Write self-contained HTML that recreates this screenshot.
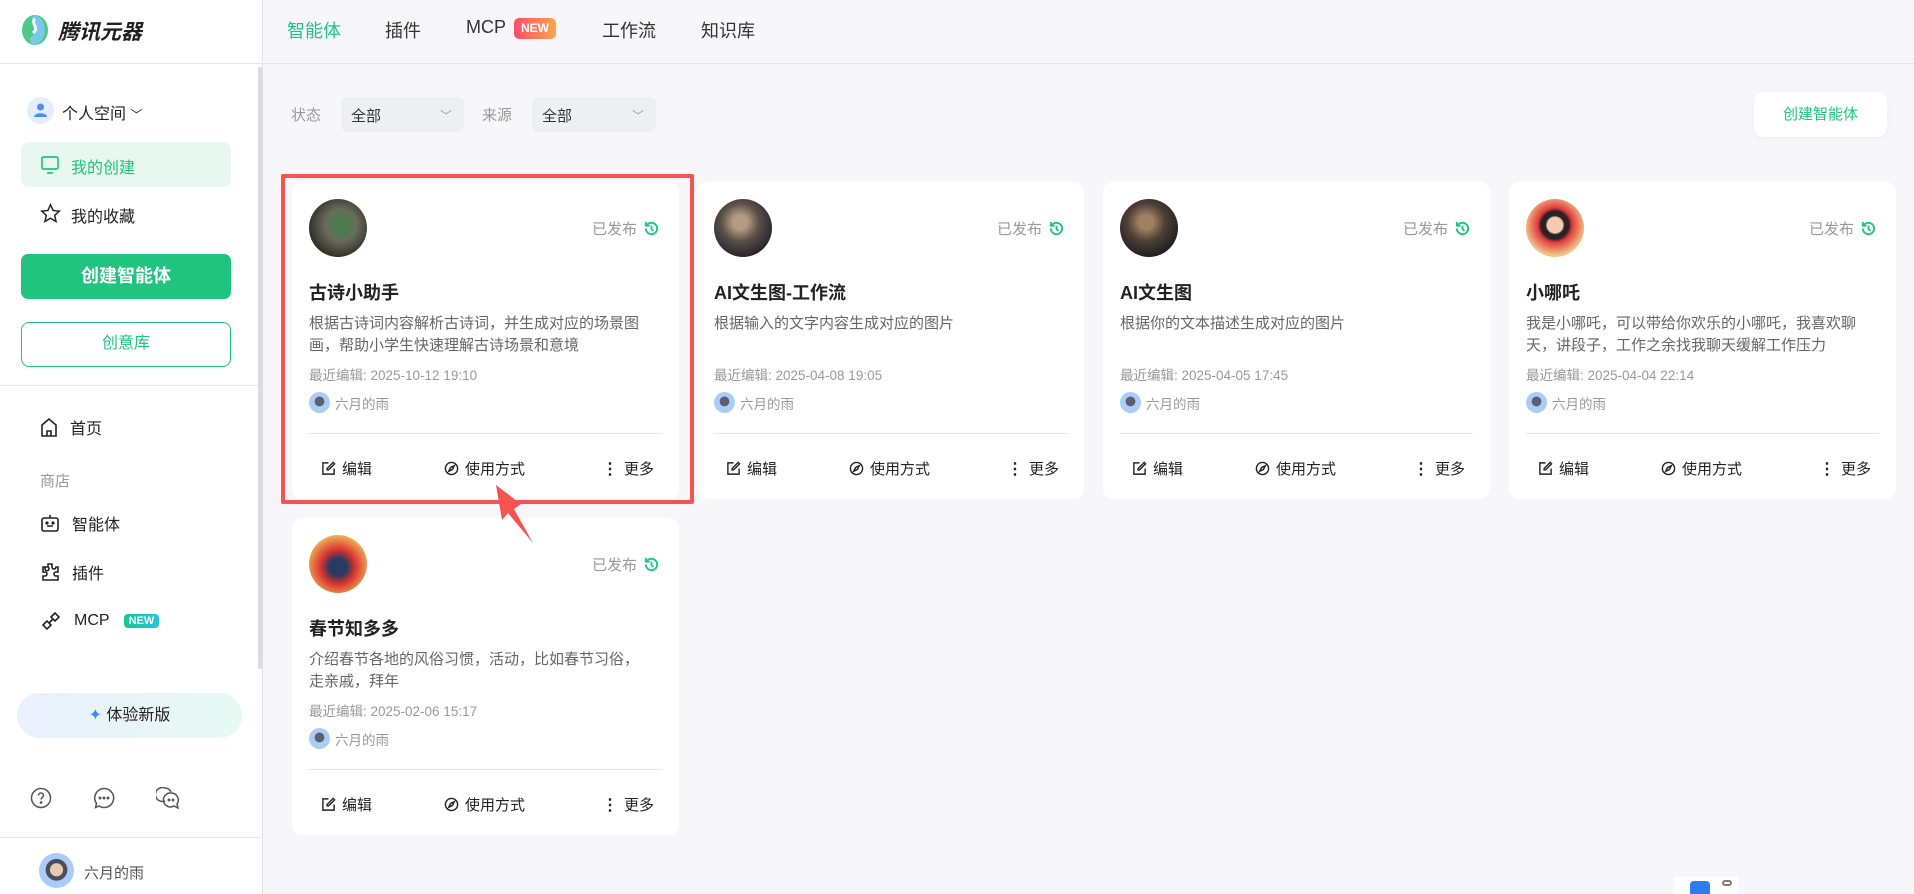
<!DOCTYPE html>
<html><head><meta charset="utf-8">
<style>
*{margin:0;padding:0;box-sizing:border-box}
body{width:1914px;height:894px;overflow:hidden;background:#f7f7fb;font-family:"Liberation Sans","Noto Sans CJK SC",sans-serif;color:#222;position:relative}
.abs{position:absolute}
.side{position:absolute;left:0;top:0;width:263px;height:894px;background:#fff;border-right:1px solid #e6e6ea}
.nav{position:absolute;font-size:18px;color:#333;top:17px}
.card{position:absolute;width:387px;height:317px;background:#fff;border-radius:10px}
.av{position:absolute;left:17px;top:17px;width:58px;height:58px;border-radius:50%}
.pub{position:absolute;right:19px;top:36px;font-size:15px;color:#999;display:flex;align-items:center;gap:6px}
.ttl{position:absolute;left:17px;top:97px;font-size:18px;font-weight:bold;color:#222}
.desc{position:absolute;left:17px;top:131px;width:340px;font-size:15px;line-height:22px;color:#666}
.time{position:absolute;left:17px;top:182px;font-size:13.5px;color:#999}
.auth{position:absolute;left:17px;top:210px;font-size:13.5px;color:#999;display:flex;align-items:center;gap:5px}
.auth i{width:21px;height:21px;border-radius:50%;background:radial-gradient(circle at 50% 45%,#5a5f70 30%,#a9cdf8 32%)}
.line{position:absolute;left:17px;right:17px;top:251px;border-top:1px solid #e8e8ec}
.act{position:absolute;top:276px;font-size:15px;color:#222;display:flex;align-items:center;gap:6px}
.si{position:absolute;left:40px;font-size:16px;color:#222;display:flex;align-items:center;gap:12px}
</style></head><body>
<div class="side">
  <svg class="abs" style="left:20px;top:14px" width="30" height="32" viewBox="0 0 30 32"><ellipse cx="15" cy="16" rx="13" ry="15" fill="#4fc98a"/><path d="M15 1 C4 6 26 14 12 22 C8 25 10 30 15 31 C28 27 28 5 15 1Z" fill="#7ac8e8"/><path d="M15 5 C10 9 20 14 13 19" stroke="#fff" stroke-width="3" fill="none"/></svg>
  <div class="abs" style="left:58px;top:16px;font-size:21px;font-weight:bold;font-style:italic;color:#222">腾讯元器</div>
  <div class="abs" style="left:0;top:63px;width:263px;border-top:1px solid #e6e6ea"></div>
  <div class="abs" style="left:27px;top:97px;width:27px;height:27px;border-radius:50%;background:#e3edfd"><svg width="27" height="27"><circle cx="13.5" cy="10" r="3.5" fill="#4b8cf5"/><path d="M7 20c0-5 13-5 13 0z" fill="#4b8cf5"/></svg></div>
  <div class="abs" style="left:62px;top:100px;font-size:16px">个人空间 <span style="font-size:12px">﹀</span></div>
  <div class="abs" style="left:21px;top:142px;width:210px;height:45px;background:#e8f7ef;border-radius:8px"></div>
  <svg class="abs" style="left:40px;top:155px" width="20" height="20" viewBox="0 0 20 20" fill="none" stroke="#20c47f" stroke-width="1.7"><rect x="2" y="2" width="16" height="12" rx="1.5"/><path d="M7 18h6"/></svg>
  <div class="abs" style="left:71px;top:154px;font-size:16px;color:#20c47f">我的创建</div>
  <svg class="abs" style="left:40px;top:203px" width="21" height="21" viewBox="0 0 24 24" fill="none" stroke="#222" stroke-width="1.7"><path d="M12 2l3 6.5 7 .8-5.2 4.8 1.5 7-6.3-3.7-6.3 3.7 1.5-7L2 9.3l7-.8z"/></svg>
  <div class="abs" style="left:71px;top:203px;font-size:16px">我的收藏</div>
  <div class="abs" style="left:21px;top:254px;width:210px;height:45px;background:#20c47f;border-radius:7px;color:#fff;font-size:18px;font-weight:bold;text-align:center;line-height:45px">创建智能体</div>
  <div class="abs" style="left:21px;top:322px;width:210px;height:45px;border:1.5px solid #20c47f;border-radius:8px;color:#20c47f;font-size:16px;text-align:center;line-height:42px">创意库</div>
  <div class="abs" style="left:0;top:385px;width:258px;border-top:1px solid #e6e6ea"></div>
  <div class="si" style="top:415px"><svg width="18" height="20" viewBox="0 0 18 20" fill="none" stroke="#222" stroke-width="1.6"><path d="M2 8l7-6 7 6v11H2z M7 19v-5h4v5"/></svg>首页</div>
  <div class="abs" style="left:40px;top:470px;font-size:15px;color:#999">商店</div>
  <div class="si" style="top:511px"><svg width="20" height="20" viewBox="0 0 20 20" fill="none" stroke="#222" stroke-width="1.6"><rect x="2" y="5" width="16" height="13" rx="2"/><path d="M10 2v3M7 13h6"/><circle cx="7" cy="10" r=".8" fill="#222"/><circle cx="13" cy="10" r=".8" fill="#222"/></svg>智能体</div>
  <div class="si" style="top:560px"><svg width="20" height="20" viewBox="0 0 20 20" fill="none" stroke="#222" stroke-width="1.6"><path d="M8 2h4v3a2 2 0 104 0h2v5h-2a2 2 0 100 4h2v4H3v-4h2a2 2 0 100-4H3V5h3a2 2 0 102 0z"/></svg>插件</div>
  <div class="si" style="top:610px"><svg width="22" height="22" viewBox="0 0 22 22" fill="none" stroke="#222" stroke-width="1.6"><path d="M3 15l4-4 4 4-4 4zM11 7l4-4 4 4-4 4zM9 13l4-4"/></svg>MCP <span style="background:linear-gradient(90deg,#12c98f,#27c4e0);color:#fff;font-size:11px;font-weight:bold;border-radius:4px;padding:1px 5px;margin-left:2px">NEW</span></div>
  <div class="abs" style="left:17px;top:693px;width:225px;height:45px;border-radius:23px;background:linear-gradient(90deg,#eaf0fd,#e6faf3);font-size:16px;text-align:center;line-height:45px"><span style="color:#3a8cf0">✦</span> 体验新版</div>
  <svg class="abs" style="left:30px;top:787px" width="22" height="22" viewBox="0 0 22 22" fill="none" stroke="#555" stroke-width="1.5"><circle cx="11" cy="11" r="9.5"/><path d="M8.5 8.5a2.5 2.5 0 115 0c0 1.8-2.5 2-2.5 4"/><circle cx="11" cy="15.5" r=".6" fill="#555"/></svg>
  <svg class="abs" style="left:93px;top:787px" width="22" height="22" viewBox="0 0 22 22" fill="none" stroke="#555" stroke-width="1.5"><path d="M11 1.5a9.5 9.5 0 11-5 17.5L2.5 20.5l1-4A9.5 9.5 0 0111 1.5z"/><circle cx="7" cy="11" r=".7" fill="#555"/><circle cx="11" cy="11" r=".7" fill="#555"/><circle cx="15" cy="11" r=".7" fill="#555"/></svg>
  <svg class="abs" style="left:156px;top:787px" width="24" height="22" viewBox="0 0 24 22" fill="none" stroke="#555" stroke-width="1.5"><path d="M9 14A7 7 0 119 1a7 7 0 016 4"/><path d="M15 6a7 7 0 016 11l1 4-4-2A7 7 0 1115 6z"/><circle cx="13" cy="13" r=".7" fill="#555"/><circle cx="17" cy="13" r=".7" fill="#555"/></svg>
  <div class="abs" style="left:0;top:837px;width:263px;border-top:1px solid #e6e6ea"></div>
  <div class="abs" style="left:39px;top:853px;width:35px;height:35px;border-radius:50%;background:radial-gradient(circle at 50% 48%,#e8c8b0 0 25%,#4a4e5c 27% 42%,#a9cdf8 44%)"></div>
  <div class="abs" style="left:84px;top:862px;font-size:15px;color:#555">六月的雨</div>
</div>
<div class="abs" style="left:258px;top:67px;width:5px;height:602px;background:#dcdce0;border-radius:3px"></div>

<div class="abs" style="left:263px;top:63px;width:1651px;border-top:1px solid #e6e6ea"></div>
<div class="nav" style="left:287px;color:#20c47f">智能体</div>
<div class="nav" style="left:385px">插件</div>
<div class="nav" style="left:466px">MCP</div>
<div class="abs" style="left:514px;top:18px;width:42px;height:21px;border-radius:5px;background:linear-gradient(90deg,#ff4d6a,#ffa64d);color:#fff;font-size:12px;font-weight:bold;text-align:center;line-height:21px">NEW</div>
<div class="nav" style="left:602px">工作流</div>
<div class="nav" style="left:701px">知识库</div>

<div class="abs" style="left:291px;top:104px;font-size:15px;color:#999">状态</div>
<div class="abs" style="left:341px;top:97px;width:123px;height:35px;background:#eeeff3;border-radius:7px;font-size:15px;color:#333;padding:8px 0 0 10px">全部<span style="position:absolute;right:12px;top:10px;color:#999;font-size:12px">﹀</span></div>
<div class="abs" style="left:482px;top:104px;font-size:15px;color:#999">来源</div>
<div class="abs" style="left:532px;top:97px;width:124px;height:35px;background:#eeeff3;border-radius:7px;font-size:15px;color:#333;padding:8px 0 0 10px">全部<span style="position:absolute;right:12px;top:10px;color:#999;font-size:12px">﹀</span></div>
<div class="abs" style="left:1754px;top:92px;width:133px;height:45px;background:#fff;border-radius:10px;color:#20c47f;font-size:15px;text-align:center;line-height:45px;box-shadow:0 2px 6px rgba(0,0,0,.04)">创建智能体</div>

<div class="card" style="left:292px;top:182px">
  <div class="av" style="background:radial-gradient(circle at 55% 45%,#4f7a4e 0 20%,#6b6b5a 35%,#2b2a24 75%)"></div>
  <div class="pub">已发布 <svg width="17" height="17" viewBox="0 0 18 18" fill="none" stroke="#20c47f" stroke-width="2"><path d="M3 9a6 6 0 106-6 6 6 0 00-5 2.5"/><path d="M3 2v4h4M9 6v3.5l2 2"/></svg></div>
  <div class="ttl">古诗小助手</div>
  <div class="desc">根据古诗词内容解析古诗词，并生成对应的场景图画，帮助小学生快速理解古诗场景和意境</div>
  <div class="time">最近编辑: 2025-10-12 19:10</div>
  <div class="auth"><i></i>六月的雨</div>
  <div class="line"></div>
  <div class="act" style="left:29px"><svg width="15" height="15" viewBox="0 0 16 16" fill="none" stroke="#222" stroke-width="1.5"><path d="M8 2H2v12h12V8M13 1.5l1.5 1.5L8 9.5H6.5V8z"/></svg>编辑</div>
  <div class="act" style="left:152px"><svg width="15" height="15" viewBox="0 0 16 16" fill="none" stroke="#222" stroke-width="1.5"><circle cx="8" cy="8" r="6.5"/><path d="M11 5L9 9 5 11l2-4z"/></svg>使用方式</div>
  <div class="act" style="left:310px"><b style="font-size:16px">⋮</b> 更多</div>
</div>
<div class="card" style="left:697px;top:182px">
  <div class="av" style="background:radial-gradient(circle at 45% 40%,#b59c80 0 15%,#5a5148 40%,#23242b 75%)"></div>
  <div class="pub">已发布 <svg width="17" height="17" viewBox="0 0 18 18" fill="none" stroke="#20c47f" stroke-width="2"><path d="M3 9a6 6 0 106-6 6 6 0 00-5 2.5"/><path d="M3 2v4h4M9 6v3.5l2 2"/></svg></div>
  <div class="ttl">AI文生图-工作流</div>
  <div class="desc">根据输入的文字内容生成对应的图片</div>
  <div class="time">最近编辑: 2025-04-08 19:05</div>
  <div class="auth"><i></i>六月的雨</div>
  <div class="line"></div>
  <div class="act" style="left:29px"><svg width="15" height="15" viewBox="0 0 16 16" fill="none" stroke="#222" stroke-width="1.5"><path d="M8 2H2v12h12V8M13 1.5l1.5 1.5L8 9.5H6.5V8z"/></svg>编辑</div>
  <div class="act" style="left:152px"><svg width="15" height="15" viewBox="0 0 16 16" fill="none" stroke="#222" stroke-width="1.5"><circle cx="8" cy="8" r="6.5"/><path d="M11 5L9 9 5 11l2-4z"/></svg>使用方式</div>
  <div class="act" style="left:310px"><b style="font-size:16px">⋮</b> 更多</div>
</div>
<div class="card" style="left:1103px;top:182px">
  <div class="av" style="background:radial-gradient(circle at 45% 40%,#a08060 0 15%,#4e4036 40%,#1e1d22 75%)"></div>
  <div class="pub">已发布 <svg width="17" height="17" viewBox="0 0 18 18" fill="none" stroke="#20c47f" stroke-width="2"><path d="M3 9a6 6 0 106-6 6 6 0 00-5 2.5"/><path d="M3 2v4h4M9 6v3.5l2 2"/></svg></div>
  <div class="ttl">AI文生图</div>
  <div class="desc">根据你的文本描述生成对应的图片</div>
  <div class="time">最近编辑: 2025-04-05 17:45</div>
  <div class="auth"><i></i>六月的雨</div>
  <div class="line"></div>
  <div class="act" style="left:29px"><svg width="15" height="15" viewBox="0 0 16 16" fill="none" stroke="#222" stroke-width="1.5"><path d="M8 2H2v12h12V8M13 1.5l1.5 1.5L8 9.5H6.5V8z"/></svg>编辑</div>
  <div class="act" style="left:152px"><svg width="15" height="15" viewBox="0 0 16 16" fill="none" stroke="#222" stroke-width="1.5"><circle cx="8" cy="8" r="6.5"/><path d="M11 5L9 9 5 11l2-4z"/></svg>使用方式</div>
  <div class="act" style="left:310px"><b style="font-size:16px">⋮</b> 更多</div>
</div>
<div class="card" style="left:1509px;top:182px">
  <div class="av" style="background:radial-gradient(circle at 50% 45%,#f4cdb0 0 18%,#2a2224 22% 32%,#e23a3a 40%,#f2c48a 70%)"></div>
  <div class="pub">已发布 <svg width="17" height="17" viewBox="0 0 18 18" fill="none" stroke="#20c47f" stroke-width="2"><path d="M3 9a6 6 0 106-6 6 6 0 00-5 2.5"/><path d="M3 2v4h4M9 6v3.5l2 2"/></svg></div>
  <div class="ttl">小哪吒</div>
  <div class="desc">我是小哪吒，可以带给你欢乐的小哪吒，我喜欢聊天，讲段子，工作之余找我聊天缓解工作压力</div>
  <div class="time">最近编辑: 2025-04-04 22:14</div>
  <div class="auth"><i></i>六月的雨</div>
  <div class="line"></div>
  <div class="act" style="left:29px"><svg width="15" height="15" viewBox="0 0 16 16" fill="none" stroke="#222" stroke-width="1.5"><path d="M8 2H2v12h12V8M13 1.5l1.5 1.5L8 9.5H6.5V8z"/></svg>编辑</div>
  <div class="act" style="left:152px"><svg width="15" height="15" viewBox="0 0 16 16" fill="none" stroke="#222" stroke-width="1.5"><circle cx="8" cy="8" r="6.5"/><path d="M11 5L9 9 5 11l2-4z"/></svg>使用方式</div>
  <div class="act" style="left:310px"><b style="font-size:16px">⋮</b> 更多</div>
</div>
<div class="card" style="left:292px;top:518px">
  <div class="av" style="background:radial-gradient(circle at 50% 55%,#2a3a60 0 20%,#d8342f 40%,#f1b65a 75%)"></div>
  <div class="pub">已发布 <svg width="17" height="17" viewBox="0 0 18 18" fill="none" stroke="#20c47f" stroke-width="2"><path d="M3 9a6 6 0 106-6 6 6 0 00-5 2.5"/><path d="M3 2v4h4M9 6v3.5l2 2"/></svg></div>
  <div class="ttl">春节知多多</div>
  <div class="desc">介绍春节各地的风俗习惯，活动，比如春节习俗，<br>走亲戚，拜年</div>
  <div class="time">最近编辑: 2025-02-06 15:17</div>
  <div class="auth"><i></i>六月的雨</div>
  <div class="line"></div>
  <div class="act" style="left:29px"><svg width="15" height="15" viewBox="0 0 16 16" fill="none" stroke="#222" stroke-width="1.5"><path d="M8 2H2v12h12V8M13 1.5l1.5 1.5L8 9.5H6.5V8z"/></svg>编辑</div>
  <div class="act" style="left:152px"><svg width="15" height="15" viewBox="0 0 16 16" fill="none" stroke="#222" stroke-width="1.5"><circle cx="8" cy="8" r="6.5"/><path d="M11 5L9 9 5 11l2-4z"/></svg>使用方式</div>
  <div class="act" style="left:310px"><b style="font-size:16px">⋮</b> 更多</div>
</div>

<div class="abs" style="left:281px;top:174px;width:413px;height:330px;border:4px solid #f55252;border-radius:2px"></div>
<svg class="abs" style="left:0;top:0" width="1914" height="894"><polygon points="496,485 521,504 514,509 533,543 508,513 502,520" fill="#f55252"/></svg>

<div class="abs" style="left:1674px;top:877px;width:64px;height:17px;background:#fff"></div>
<div class="abs" style="left:1690px;top:881px;width:20px;height:13px;background:#2f7cf0;border-radius:4px 4px 0 0"></div>
<div class="abs" style="left:1722px;top:880px;width:10px;height:6px;border:2px solid #8a7a6a;border-radius:3px"></div>
</body></html>
